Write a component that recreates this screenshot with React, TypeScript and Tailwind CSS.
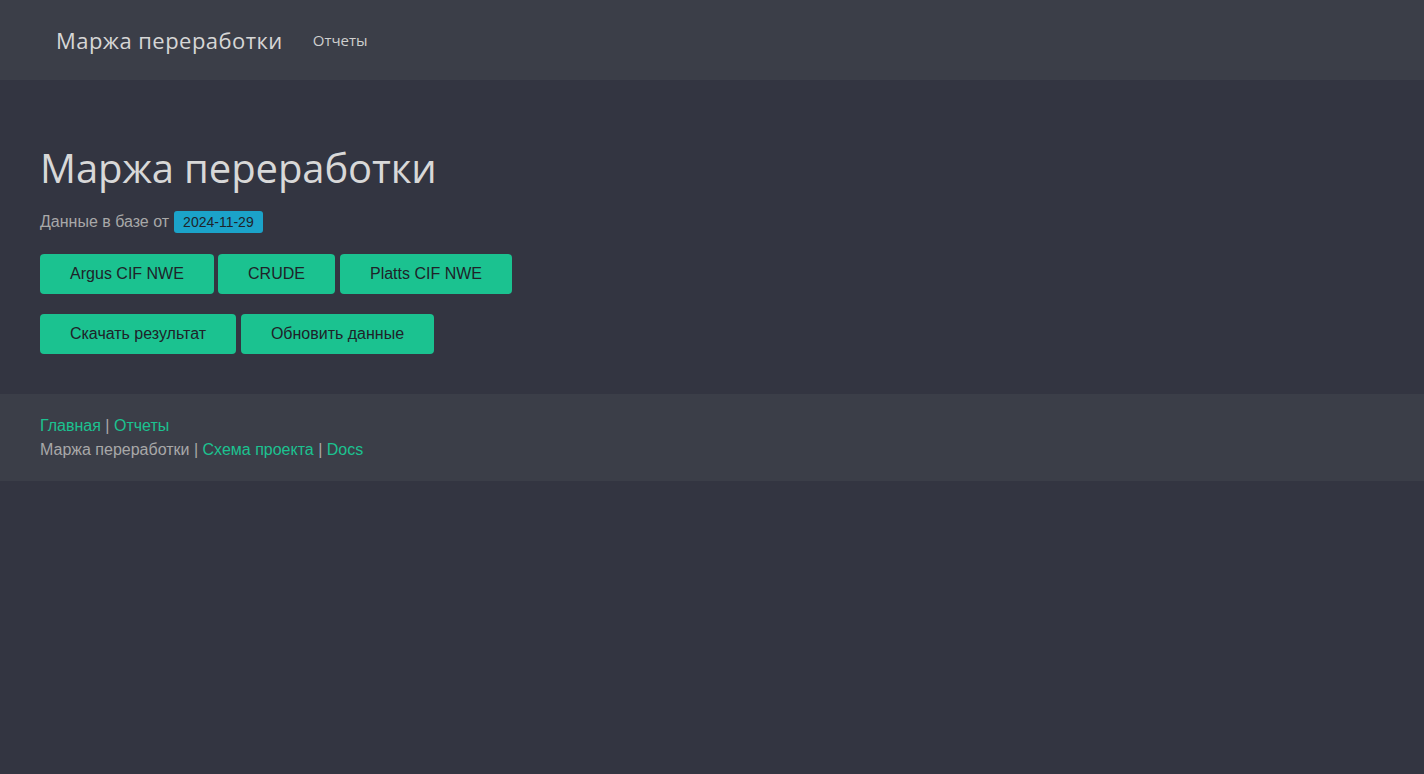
export default function App() {
  const btn =
    "h-10 rounded-[4px] bg-[#1bc290] text-[#1f2329] text-base whitespace-nowrap text-center font-['Liberation_Sans',Arial,sans-serif]";
  return (
    <div className="min-h-[774px] bg-[#333541] font-['Liberation_Sans',Arial,sans-serif]">
      <nav className="h-20 bg-[#3b3e48] flex items-center pl-14">
        <span className="text-[22px] text-[#d6d6d6] font-['Open_Sans',sans-serif] tracking-[0.45px]">Маржа переработки</span>
        <span className="ml-[30px] text-[15px] text-[#cfcfcf] font-['Open_Sans',sans-serif]">Отчеты</span>
      </nav>
      <main className="px-10 pt-[60px] pb-10">
        <h1 className="text-[40px] leading-[56px] text-[#d8d8d8] font-['Open_Sans',sans-serif] tracking-[-0.1px]">Маржа переработки</h1>
        <div className="mt-[14px] flex items-center text-base text-[#a8a8a8]">
          <span>Данные в базе от</span>
          <span className="ml-[5px] rounded-[3px] bg-[#1ba3c9] px-[9px] text-[14px] leading-[22px] text-[#1f2329]">2024-11-29</span>
        </div>
        <div className="mt-[20px] flex gap-[4px]">
          <button className={btn + " w-[174px]"}>Argus CIF NWE</button>
          <button className={btn + " w-[117px]"}>CRUDE</button>
          <button className={btn + " w-[172px] ml-[1px]"}>Platts CIF NWE</button>
        </div>
        <div className="mt-[20px] flex gap-[5px]">
          <button className={btn + " w-[196px]"}>Скачать результат</button>
          <button className={btn + " w-[193px]"}>Обновить данные</button>
        </div>
      </main>
      <footer className="bg-[#3b3e48] px-10 pt-[20px] pb-[19px] text-base leading-6 text-[#a8a8a8]">
        <div>
          <a className="text-[#1bc290]">Главная</a> | <a className="text-[#1bc290]">Отчеты</a>
        </div>
        <div>
          Маржа переработки | <a className="text-[#1bc290]">Схема проекта</a> | <a className="text-[#1bc290]">Docs</a>
        </div>
      </footer>
    </div>
  );
}
